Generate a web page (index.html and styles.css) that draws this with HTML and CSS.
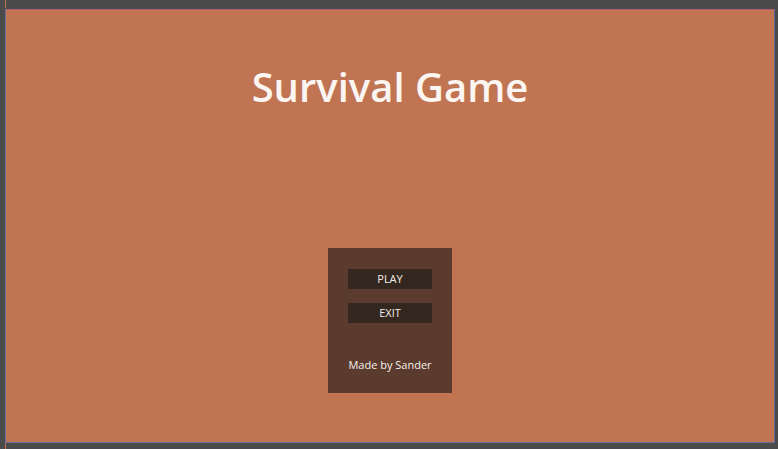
FILE: index.html
```html
<!DOCTYPE html>
<html>
<head>
<meta charset="utf-8">
<link rel="stylesheet" href="styles.css">
</head>
<body>
<div class="topbar"><span class="tick"></span></div>
<div class="row">
  <div class="frame">
    <h1 class="title">Survival Game</h1>
    <div class="menu">
      <div class="btn">PLAY</div>
      <div class="btn">EXIT</div>
      <div class="credit">Made by Sander</div>
    </div>
  </div>
</div>
<div class="bottombar"><span class="tick"></span></div>
</body>
</html>
```
FILE: styles.css
```css
html, body {
  margin: 0;
  padding: 0;
  background: #4b4b4b;
  width: 778px;
  height: 449px;
  overflow: hidden;
  font-family: "Open Sans", sans-serif;
}
.topbar {
  height: 9px;
  padding-left: 5px;
  display: flex;
}
.bottombar {
  height: 6px;
  padding-left: 5px;
  display: flex;
}
.tick {
  width: 1px;
  height: 8px;
  background: #c07452;
}
.row {
  display: flex;
  padding-left: 5px;
}
.frame {
  width: 768px;
  height: 432px;
  background: #c07452;
  border-top: 1px solid #b45a72;
  border-left: 1px solid #6a6f9c;
  border-right: 1px solid #5f6a9c;
  border-bottom: 1px solid #6a6f9c;
  display: flex;
  flex-direction: column;
  align-items: center;
}
.title {
  margin: 57px 0 0;
  font-size: 40px;
  line-height: 40px;
  font-weight: 600;
  color: #fbf6f2;
}
.menu {
  margin-top: 141px;
  width: 124px;
  height: 145px;
  box-sizing: border-box;
  background: #5c3b2f;
  padding-top: 21px;
  display: flex;
  flex-direction: column;
  align-items: center;
}
.btn {
  width: 84px;
  height: 20px;
  background: #34271f;
  color: #f3ece8;
  font-size: 11px;
  line-height: 20px;
  text-align: center;
  margin-bottom: 14px;
}
.credit {
  margin-top: 20px;
  color: #f6efe9;
  font-size: 11px;
  line-height: 16px;
}
```
